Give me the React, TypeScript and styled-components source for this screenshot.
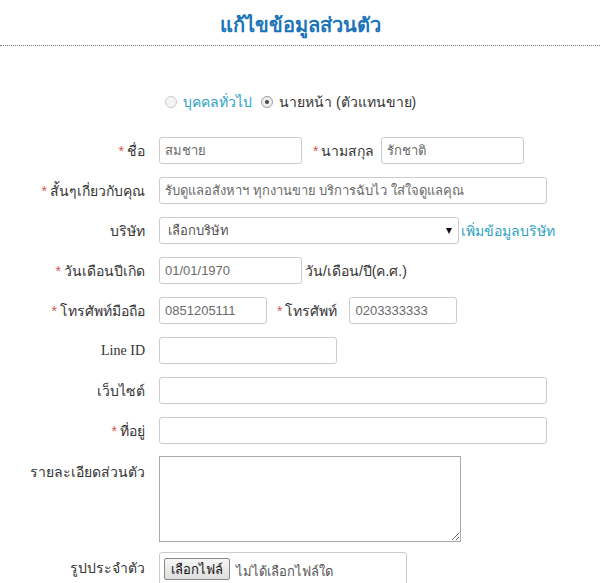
import React from "react";
import styled, { createGlobalStyle } from "styled-components";

const Global = createGlobalStyle`
  html, body { margin: 0; padding: 0; background: #fff; }
  body { font-family: Tahoma, "Liberation Sans", sans-serif; color: #333; font-size: 14px; }
  * { box-sizing: border-box; }
`;

const Page = styled.div`
  width: 600px;
  height: 583px;
  overflow: hidden;
`;

const Header = styled.div`
  height: 46px;
  border-bottom: 1px dotted #777;
  display: flex;
  align-items: center;
  justify-content: center;
  padding-top: 4px;
`;

const Title = styled.h1`
  margin: 0;
  font-size: 20px;
  font-weight: bold;
  color: #1b74b8;
`;

const Form = styled.form`
  padding-top: 45px;
  display: flex;
  flex-direction: column;
`;

const RadioRow = styled.div`
  display: flex;
  align-items: center;
  padding-left: 165px;
  height: 22px;
  margin-bottom: 24px;
`;

const RadioDot = styled.span<{ $checked?: boolean }>`
  width: 12px;
  height: 12px;
  border-radius: 50%;
  border: 1px solid ${(p) => (p.$checked ? "#a0a0a0" : "#c8c8c8")};
  background: ${(p) => (p.$checked ? "#eee" : "#f4f4f4")};
  display: inline-flex;
  align-items: center;
  justify-content: center;
  margin-right: 6px;
  &::after {
    content: "";
    width: 4px;
    height: 4px;
    border-radius: 50%;
    background: ${(p) => (p.$checked ? "#444" : "transparent")};
  }
`;

const RadioText = styled.span<{ $link?: boolean }>`
  color: ${(p) => (p.$link ? "#2ba1c4" : "#333")};
  margin-right: 9px;
`;

const Row = styled.div<{ $h?: number; $mb?: number }>`
  display: flex;
  align-items: center;
  height: ${(p) => p.$h ?? 27}px;
  margin-bottom: ${(p) => p.$mb ?? 13}px;
`;

const TopRow = styled(Row)`
  align-items: flex-start;
`;

const Label = styled.label<{ $top?: boolean; $serif?: boolean }>`
  width: 159px;
  padding-right: 14px;
  text-align: right;
  flex: none;
  font-size: 14px;
  color: #333;
  ${(p) => (p.$top ? "padding-top: 5px;" : "")}
  ${(p) => (p.$serif ? 'font-family: "Liberation Serif", serif; font-size: 14px;' : "")}
`;

const InlineLabel = styled.span<{ $ml: number; $mr: number }>`
  margin-left: ${(p) => p.$ml}px;
  margin-right: ${(p) => p.$mr}px;
  white-space: nowrap;
`;

const Star = styled.span`
  color: #d9534f;
  margin-right: 3px;
`;

const Input = styled.input<{ $w: number }>`
  width: ${(p) => p.$w}px;
  height: 27px;
  border: 1px solid #ccc;
  border-radius: 3px;
  padding: 0 5px;
  font-family: Tahoma, "Liberation Sans", sans-serif;
  font-size: 13px;
  color: #6a6a6a;
  background: #fff;
  outline: none;
  flex: none;
`;

const SelectBox = styled.div`
  width: 300px;
  height: 27px;
  border: 1px solid #ccc;
  border-radius: 3px;
  padding: 0 7px 0 8px;
  display: flex;
  align-items: center;
  justify-content: space-between;
  font-size: 13px;
  color: #555;
  flex: none;
`;

const Arrow = styled.span`
  width: 0;
  height: 0;
  border-left: 3.5px solid transparent;
  border-right: 3.5px solid transparent;
  border-top: 6px solid #111;
  margin-right: -1px;
`;

const Link = styled.a`
  color: #2ba1c4;
  margin-left: 2px;
  text-decoration: none;
  white-space: nowrap;
`;

const Note = styled.span`
  margin-left: 3px;
  white-space: nowrap;
`;

const TextArea = styled.textarea`
  width: 302px;
  height: 86px;
  border: 1px solid #a9a9a9;
  flex: none;
  resize: both;
  font-family: Tahoma, "Liberation Sans", sans-serif;
`;

const FileBox = styled.div`
  width: 248px;
  height: 40px;
  border: 1px solid #ccc;
  border-radius: 3px;
  padding: 4px 0 0 4px;
  display: flex;
  align-items: flex-start;
  flex: none;
`;

const FileButton = styled.button`
  height: 22px;
  padding: 0 6px;
  border: 1px solid #888;
  border-radius: 2px;
  background: linear-gradient(#f6f6f6, #dedede);
  font-family: Tahoma, "Liberation Sans", sans-serif;
  font-size: 13px;
  color: #111;
  margin-top: 1px;
`;

const FileText = styled.span`
  font-size: 13px;
  color: #555;
  margin-left: 6px;
  margin-top: 4px;
`;

export default function App() {
  return (
    <Page>
      <Global />
      <Header>
        <Title>แก้ไขข้อมูลส่วนตัว</Title>
      </Header>
      <Form onSubmit={(e) => e.preventDefault()}>
        <RadioRow>
          <RadioDot />
          <RadioText $link>บุคคลทั่วไป</RadioText>
          <RadioDot $checked />
          <RadioText>นายหน้า (ตัวแทนขาย)</RadioText>
        </RadioRow>

        <Row>
          <Label><Star>*</Star>ชื่อ</Label>
          <Input $w={143} defaultValue="สมชาย" />
          <InlineLabel $ml={11} $mr={7}><Star>*</Star>นามสกุล</InlineLabel>
          <Input $w={143} defaultValue="รักชาติ" />
        </Row>

        <Row>
          <Label><Star>*</Star>สั้นๆเกี่ยวกับคุณ</Label>
          <Input $w={388} defaultValue="รับดูแลอสังหาฯ ทุกงานขาย บริการฉับไว ใส่ใจดูแลคุณ" />
        </Row>

        <Row>
          <Label>บริษัท</Label>
          <SelectBox>
            <span>เลือกบริษัท</span>
            <Arrow />
          </SelectBox>
          <Link href="#">เพิ่มข้อมูลบริษัท</Link>
        </Row>

        <Row>
          <Label><Star>*</Star>วันเดือนปีเกิด</Label>
          <Input $w={143} defaultValue="01/01/1970" />
          <Note>วัน/เดือน/ปี(ค.ศ.)</Note>
        </Row>

        <Row>
          <Label><Star>*</Star>โทรศัพท์มือถือ</Label>
          <Input $w={108} defaultValue="0851205111" />
          <InlineLabel $ml={10} $mr={12}><Star>*</Star>โทรศัพท์</InlineLabel>
          <Input $w={108} defaultValue="0203333333" />
        </Row>

        <Row>
          <Label $serif>Line ID</Label>
          <Input $w={178} />
        </Row>

        <Row>
          <Label>เว็บไซต์</Label>
          <Input $w={388} />
        </Row>

        <Row $mb={12}>
          <Label><Star>*</Star>ที่อยู่</Label>
          <Input $w={388} />
        </Row>

        <TopRow $h={86} $mb={10}>
          <Label $top>รายละเอียดส่วนตัว</Label>
          <TextArea />
        </TopRow>

        <TopRow $h={40}>
          <Label $top>รูปประจำตัว</Label>
          <FileBox>
            <FileButton type="button">เลือกไฟล์</FileButton>
            <FileText>ไม่ได้เลือกไฟล์ใด</FileText>
          </FileBox>
        </TopRow>
      </Form>
    </Page>
  );
}
